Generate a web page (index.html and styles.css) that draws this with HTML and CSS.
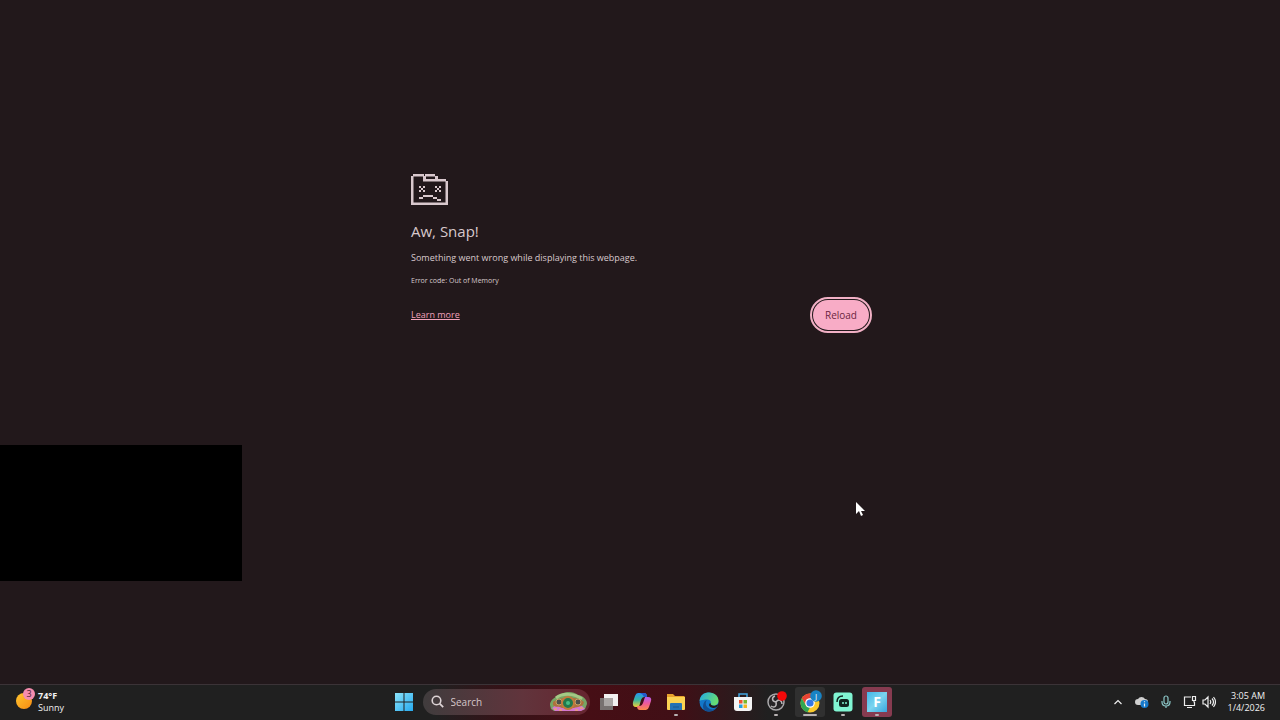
FILE: index.html
```html
<!DOCTYPE html>
<html lang="en">
<head>
    <meta charset="utf-8">
    <title>Aw, Snap!</title>
    <link rel="stylesheet" href="styles.css">
</head>
<body>
    <main class="page">
        <div class="error">
            <svg class="sad-tab" viewBox="0 0 37 31" aria-hidden="true">
                <path d="M2 0h11v2h2v3h20v2h2v24H0V2h2zM2.500 2.500v26h32v-21H12v-5z" fill-rule="evenodd"/>
                <path d="M14 0h10v2h3v3h-3V2.500H14z"/>
                <path d="M8 12h2v2H8zM12 12h2v2h-2zM10 14h2v2h-2zM8 16h2v2H8zM12 16h2v2h-2zM24 12h2v2h-2zM28 12h2v2h-2zM26 14h2v2h-2zM24 16h2v2h-2zM28 16h2v2h-2z"/>
                <path d="M12 21h10v2H12zM8 23h4v2H8zM22 23h4v2h-4zM26 25h4v2h-4z"/>
            </svg>
            <h1>Aw, Snap!</h1>
            <p class="message">Something went wrong while displaying this webpage.</p>
            <p class="code">Error code: Out of Memory</p>
            <div class="actions">
                <a href="#">Learn more</a>
                <button class="reload">Reload</button>
            </div>
        </div>
        <div class="black-box"></div>
        <svg class="cursor" viewBox="0 0 10 16" aria-hidden="true"><path d="M1 1v12l3-3 2 5 2-1-2-4h4z"/></svg>
    </main>

    <footer class="taskbar">
        <button class="weather">
            <svg width="22" height="30" viewBox="0 0 22 30" aria-hidden="true">
                <defs><linearGradient id="sun" x2="1" y2="1"><stop stop-color="#ffc52e"/><stop offset="1" stop-color="#f78b12"/></linearGradient></defs>
                <circle cx="9" cy="14" r="8" fill="url(#sun)"/>
                <circle cx="14" cy="7" r="6" fill="#f58cae"/>
                <text x="14" y="10" text-anchor="middle" font-size="9" fill="#49202e">3</text>
            </svg>
            <span class="lines"><b>74°F</b><span>Sunny</span></span>
        </button>

        <div class="center">
            <button class="app" aria-label="Start">
                <svg width="18" height="18" viewBox="0 0 18 18">
                    <defs><linearGradient id="win" x1="0" y1="0" x2="18" y2="18" gradientUnits="userSpaceOnUse"><stop stop-color="#8be4fb"/><stop offset="1" stop-color="#26a9ee"/></linearGradient></defs>
                    <path fill="url(#win)" d="M0 0h8.500v8.500H0zM9.500 0H18v8.500H9.500zM0 9.500h8.500V18H0zM9.500 9.500H18V18H9.500z"/>
                </svg>
            </button>
            <label class="search">
                <svg width="13" height="13" viewBox="0 0 13 13" aria-hidden="true"><circle cx="5.500" cy="5.500" r="4.300" fill="none" stroke="#ddd3d5" stroke-width="1.600"/><path d="M8.700 8.700l3.500 3.500" stroke="#ddd3d5" stroke-width="1.800"/></svg>
                <input type="text" placeholder="Search" aria-label="Search">
                <svg width="39" height="21" viewBox="0 0 39 21" aria-hidden="true">
                    <path d="M1 14c0-4 3-7 8-9C15 0 24 0 29 4c6 1 9 5 9 9l-2 5-5 2H5l-3-2z" fill="#76a665"/>
                    <path d="M7 7C13 2 25 2 33 8" stroke="#a4c985" stroke-width="3" fill="none"/>
                    <path d="M3 17l4-3 6 2 6 3 7-3 6-2 4 4-4 2H6z" fill="#d477cf"/>
                    <path d="M4 11c7-5 24-6 31 0l-1 3c-5 3-8 2-9 3H13c-3-2-6 0-9-3z" fill="#ad713d"/>
                    <circle cx="10" cy="11" r="3" fill="#4d504b" stroke="#c9a364"/>
                    <circle cx="29" cy="11" r="3" fill="#4d504b" stroke="#c9a364"/>
                    <circle cx="19" cy="12" r="6" fill="#20794c" stroke="#c07a3c" stroke-width="2"/>
                    <circle cx="19" cy="12" r="2" fill="#45bd85"/>
                    <path d="M5 18h3M10 19h3M26 19h3M31 17h3" stroke="#f3b64e" stroke-width="1"/>
                </svg>
            </label>
            <div class="apps">
                <button class="app" aria-label="Task view">
                    <svg width="20" height="20" viewBox="0 0 20 20"><path d="M5 2h14v12H5z" fill="#f2f0f0"/><path d="M1 6h13v12H1z" fill="#777170"/><path d="M5 6h9v8H5z" fill="#aaa6a5"/></svg>
                </button>
                <button class="app" aria-label="Copilot">
                    <svg width="20" height="20" viewBox="0 0 20 20">
                        <defs>
                            <linearGradient id="cp1" x2="0" y2="1"><stop stop-color="#2794f1"/><stop offset=".5" stop-color="#38b6a0"/><stop offset="1" stop-color="#f2cf33"/></linearGradient>
                            <linearGradient id="cp2" x2="0" y2="1"><stop stop-color="#b25df0"/><stop offset=".5" stop-color="#ee5a98"/><stop offset="1" stop-color="#fb8a49"/></linearGradient>
                        </defs>
                        <path d="M6 1h6q3 0 3 4h-3q-2 0-3 3l-2 7H4q-4 0-3-5l2-6q1-3 3-3z" fill="url(#cp1)"/>
                        <path d="M14 18H8q-3 0-3-4h3q2 0 3-3l2-6h3q4 0 3 4l-2 6q-1 3-3 3z" fill="url(#cp2)"/>
                        <path d="M8 1h4q3 0 3 4h-3q-1-3-4-4z" fill="#2458cc"/>
                    </svg>
                </button>
                <button class="app open" aria-label="File Explorer">
                    <svg width="20" height="20" viewBox="0 0 20 20"><path d="M1 2h6l2 2h9l1 1v4H1z" fill="#e8a22c"/><path d="M1 5h18v12q0 1-1 1H2q-1 0-1-1z" fill="#fbd353"/><path d="M4 18v-6q0-1 1-1h10q1 0 1 1v6z" fill="#2472b5"/><path d="M7 15h6" stroke="#185990"/></svg>
                </button>
                <button class="app" aria-label="Edge">
                    <svg width="20" height="20" viewBox="0 0 20 20">
                        <defs><linearGradient id="edge" x1="0" y1="0" x2="1" y2=".4"><stop stop-color="#21a9ea"/><stop offset="1" stop-color="#67dd72"/></linearGradient></defs>
                        <circle cx="10" cy="10" r="9.500" fill="#1377c9"/>
                        <path d="M.5 9C1 3 5 .5 10 .5c6 0 9.500 4 9.500 8 0 3-2 5-5 5-3 0-3-1-3-2 1-1 0-4-3-4S2 8 .5 9z" fill="url(#edge)"/>
                        <path d="M8 8c-2 2-2 7 3 9 3 1 5 0 7-2-3 5-8 5-11 4C2 17 4 9 8 8z" fill="#114f93"/>
                        <path d="M11.500 11c0 3 4 4 8 1-1 3-3 4-5 4-4 0-6-4-3-5z" fill="#21181b"/>
                    </svg>
                </button>
                <button class="app" aria-label="Microsoft Store">
                    <svg width="20" height="20" viewBox="0 0 20 20"><path d="M6 6V2h8v4" fill="none" stroke="#42a5df" stroke-width="1.500"/><path d="M1 5h18v11q0 3-3 3H4q-3 0-3-3z" fill="#f4f4f4"/><path d="M6 8h3.500v3.500H6z" fill="#ef5330"/><path d="M10.500 8H14v3.500h-3.500z" fill="#7ab82c"/><path d="M6 12.500h3.500V16H6z" fill="#239fdc"/><path d="M10.500 12.500H14V16h-3.500z" fill="#f6b51e"/></svg>
                </button>
                <button class="app open" aria-label="OBS Studio">
                    <svg width="22" height="22" viewBox="0 0 22 22"><circle cx="11" cy="11" r="8" fill="#262426" stroke="#aaa8aa" stroke-width="1.500"/><path d="M11 11C6 10 7 6 10 5M11 11c3-4 6-1 6 2M11 11c1 5-2 6-5 4" fill="none" stroke="#bbb8ba" stroke-width="1.500"/><circle cx="17" cy="5" r="4.800" fill="#f50909"/></svg>
                </button>
                <button class="app open active" aria-label="Chrome">
                    <svg width="24" height="24" viewBox="0 0 24 24"><circle cx="12" cy="13" r="9.500" fill="#fbca2c"/><path d="M3.800 8.200a9.500 9.500 0 0 1 16.400 0H12L8 15z" fill="#e84335"/><path d="M3.800 8.200L8 15.500l4 2-2.500 4.700A9.500 9.500 0 0 1 3.800 8.200z" fill="#31a653"/><circle cx="12" cy="13" r="4.800" fill="#fff"/><circle cx="12" cy="13" r="3.600" fill="#3478e5"/><circle cx="18" cy="6" r="5.800" fill="#1883c4"/><text x="18" y="9" text-anchor="middle" font-size="8" fill="#fff">J</text></svg>
                </button>
                <button class="app open" aria-label="Streamlabs">
                    <svg width="20" height="20" viewBox="0 0 20 20"><rect x=".5" y=".5" width="19" height="19" rx="3" fill="#80f5d2"/><path d="M4 10c0-4 2-6 6-6" fill="none" stroke="#10241f" stroke-width="1.500"/><rect x="6" y="7" width="10" height="8" rx="2.500" fill="#10241f"/><path d="M10 10v2M13 10v2" stroke="#80f5d2" stroke-width="1.500"/></svg>
                </button>
                <button class="app open alert" aria-label="Fortnite">
                    <svg width="20" height="20" viewBox="0 0 20 20"><defs><linearGradient id="fn" x2="1" y2="1"><stop stop-color="#42b6e8"/><stop offset=".5" stop-color="#7bd4ef"/><stop offset="1" stop-color="#38a5dd"/></linearGradient></defs><path d="M0 0h20v20H0z" fill="url(#fn)"/><text x="10" y="15" text-anchor="middle" font-size="14" font-weight="bold" fill="#fff">F</text></svg>
                </button>
            </div>
        </div>

        <div class="tray">
            <button class="tray-btn" aria-label="Show hidden icons"><svg width="10" height="16" viewBox="0 0 10 16"><path d="M1.500 10L5 6.500 8.500 10"/></svg></button>
            <button class="tray-btn" aria-label="OneDrive">
                <svg width="14" height="16" viewBox="0 0 14 16"><path d="M3 11a3 3 0 0 1 0-6 4 4 0 0 1 7 0 3 3 0 0 1 0 6z" class="cloud"/><circle cx="9.500" cy="10" r="4" class="info"/><path d="M9.500 9.500v3M9.500 7.200v1"/></svg>
            </button>
            <button class="tray-btn mic" aria-label="Microphone"><svg width="10" height="16" viewBox="0 0 10 16"><rect x="3" y="2" width="4" height="8" rx="2"/><path d="M1 7v1q0 4 4 4t4-4V7M5 12v2"/></svg></button>
            <button class="tray-btn pair" aria-label="Network and volume">
                <svg width="15" height="16" viewBox="0 0 15 16"><path d="M8 3H1.500v8.500h10V8M4 13.500h5M9.500 2.500h3v4h-3zM11 6.500v2"/></svg>
                <svg width="14" height="16" viewBox="0 0 14 16"><path d="M1 6h2l3-3v10l-3-3H1zM8 6q1.500 2 0 4M10 4.500q3 3.500 0 7M11.500 3q4 5 0 10"/></svg>
            </button>
            <button class="clock lines"><span>3:05 AM</span><span>1/4/2026</span></button>
        </div>
    </footer>
</body>
</html>
```

FILE: styles.css
```css
* {
    box-sizing: border-box;
}

body {
    display: flex;
    flex-direction: column;
    min-height: 100vh;
    margin: 0;
    background-color: #22181b;
    color: #d8c9cd;
    font-family: "Open Sans", "Noto Sans", sans-serif;
}

button {
    padding: 0;
    border: none;
    background: none;
    color: inherit;
    font: inherit;
}

.page {
    position: relative;
    flex: 1;
    padding: 174px 20px 0;
}

.error {
    max-width: 458px;
    margin: 0 auto;
    font-size: 9px;
    line-height: 12px;
}

.sad-tab {
    display: block;
    width: 37px;
    height: 31px;
    fill: #d9c8cd;
}

h1 {
    margin: 16px 0 11px;
    font-size: 15px;
    line-height: 20px;
    font-weight: normal;
}

.message {
    margin: 0;
}

.code {
    margin: 11px 0 0;
    font-size: 7px;
}

.actions {
    display: flex;
    align-items: center;
    justify-content: space-between;
    margin-top: 13px;
}

.actions a {
    color: #f1a2bb;
}

.reload {
    width: 56px;
    height: 30px;
    border-radius: 15px;
    background-color: #f8acc6;
    color: #6b2540;
    font-size: 10px;
    outline: 2px solid #f1b0c5;
    outline-offset: 1px;
}

/* covers the corner of the page */
.black-box {
    position: absolute;
    left: 0;
    bottom: 103px;
    width: 242px;
    height: 136px;
    background-color: #000;
}

.cursor {
    position: absolute;
    left: 855px;
    top: 501px;
    width: 10px;
    height: 16px;
    fill: #fff;
}

.taskbar {
    display: grid;
    grid-template-columns: 1fr auto 1fr;
    align-items: center;
    height: 36px;
    padding-bottom: 2px;
    border-top: 1px solid #3b3337;
    background: #202020 linear-gradient(90deg, transparent 34%, #351318 39%, #460e15 46%, #400f16 53%, transparent 60%);
    color: #f2f2f2;
    font-size: 9px;
    line-height: 12px;
}

.weather {
    display: flex;
    align-items: center;
    gap: 1px;
    padding-left: 15px;
}

.lines {
    display: flex;
    flex-direction: column;
    text-align: left;
}

.center {
    display: flex;
    gap: 4px;
}

.app {
    position: relative;
    display: flex;
    align-items: center;
    justify-content: center;
    width: 30px;
    height: 30px;
    border-radius: 3px;
}

.open::after {
    content: "";
    position: absolute;
    bottom: 1px;
    width: 4px;
    height: 2px;
    border-radius: 1px;
    background-color: #b9b3b4;
}

.active {
    background-color: #303030;
}

.active::after {
    width: 14px;
}

.alert {
    background-color: #863b50;
}

.apps {
    display: flex;
    justify-content: space-between;
    width: 298px;
}

.search {
    display: flex;
    align-items: center;
    gap: 7px;
    width: 167px;
    height: 26px;
    margin: 2px 0;
    padding: 0 2px 0 8px;
    border-radius: 13px;
    background: linear-gradient(90deg, #403c3d, #61343c 60%, #66252f);
}

.search input {
    flex: 1;
    min-width: 0;
    padding: 0;
    border: none;
    background: none;
    color: #e0d4d6;
    font: inherit;
    font-size: 10px;
}

.search input::placeholder {
    color: #d5c7ca;
}

.tray {
    display: flex;
    align-items: center;
    justify-content: flex-end;
    gap: 12px;
    padding-right: 15px;
}

.tray-btn {
    display: flex;
    gap: 4px;
}

.tray-btn svg {
    fill: none;
    stroke: #eee;
    stroke-width: 1.2;
}

.tray-btn .cloud {
    fill: #cfcfcf;
    stroke: none;
}

.tray-btn .info {
    fill: #1678ca;
    stroke: none;
}

.mic svg {
    stroke: #8dc8c9;
}

.clock {
    text-align: right;
}
```
